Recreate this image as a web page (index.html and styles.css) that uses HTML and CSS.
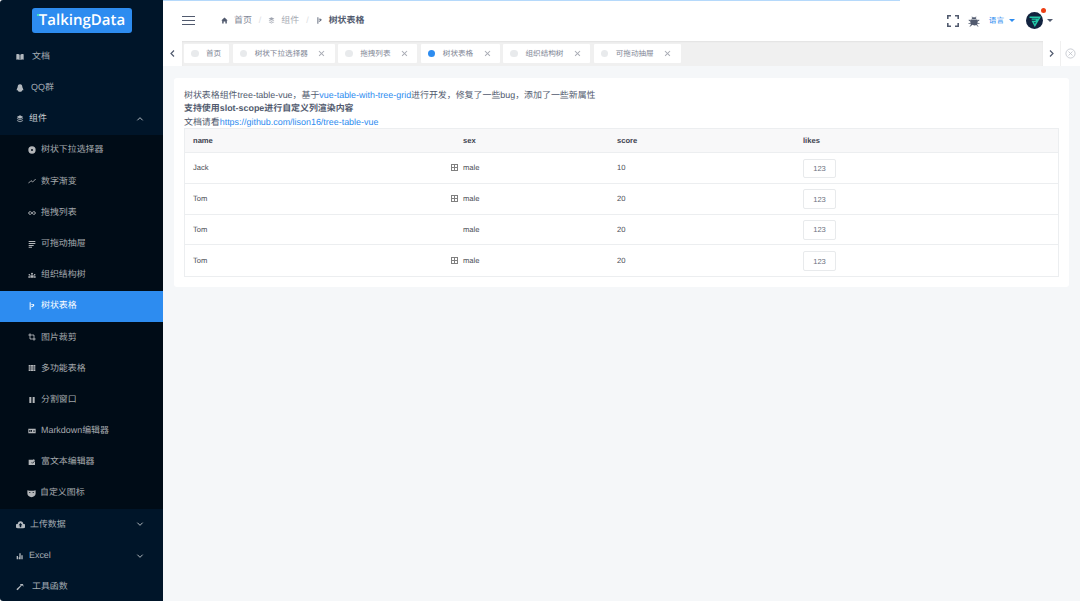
FILE: index.html
```html
<!DOCTYPE html>
<html lang="en">
  <head>
    <meta http-equiv="Content-Type" content="text/html;charset=UTF-8" />
    <title>树状表格</title>
    <link rel="stylesheet" href="styles.css">
  </head>
  <body>
    <aside class="sidebar">
      <div class="logo-wrap">
        <a class="logo"><i class="logo-dot"></i>TalkingData</a>
      </div>
      <ul class="menu">
        <li class="menu-item">
          <svg class="ico" viewBox="0 0 24 24"><path d="M1 4c4-1 8-1 10 1v16c-2-2-6-2-10-1zM23 4c-4-1-8-1-10 1v16c2-2 6-2 10-1z"/></svg>
          <span>文档</span>
        </li>
        <li class="menu-item gap-m">
          <svg class="ico" viewBox="0 0 24 24"><path d="M12 1c5 0 7 4 7 8 0 2 3 5 3 9 0 2-2 2-3 0-1 3-3 4-2 4 1 1-3 2-5 1-2 1-6 0-5-1 1 0-1-1-2-4-1 2-3 2-3 0 0-4 3-7 3-9 0-4 2-8 7-8z"/></svg>
          <span>QQ群</span>
        </li>
        <li class="menu-item gap-s is-open">
          <svg class="ico" viewBox="0 0 24 24"><path d="M12 1l10 5-10 5L2 6zM2 11l3-1 7 3.500 7-3.500 3 1-10 5zM2 17l3-1 7 3.500 7-3.500 3 1-10 5z"/></svg>
          <span>组件</span>
          <svg class="chev" viewBox="0 0 12 12"><path d="M2 8l4-4 4 4"/></svg>
        </li>
      </ul>
      <ul class="submenu">
        <li class="sub-item">
          <svg class="ico" viewBox="0 0 24 24"><path fill-rule="evenodd" d="M12 1a11 11 0 1 0 0 22 11 11 0 0 0 0-22zm0 8a3 3 0 1 1 0 6 3 3 0 0 1 0-6z"/></svg>
          <span>树状下拉选择器</span>
        </li>
        <li class="sub-item">
          <svg class="ico line" viewBox="0 0 24 24"><path d="M1 19l8-8 5 4 9-9"/></svg>
          <span>数字渐变</span>
        </li>
        <li class="sub-item">
          <svg class="ico line" viewBox="0 0 24 24"><path d="M12 12c-2-3-4-4-6-4a4 4 0 0 0 0 8c2 0 4-1 6-4 2-3 4-4 6-4a4 4 0 0 1 0 8c-2 0-4-1-6-4z"/></svg>
          <span>拖拽列表</span>
        </li>
        <li class="sub-item">
          <svg class="ico" viewBox="0 0 24 24"><path d="M2 3h20v3H2zM2 9h20v3H2zM2 15h15v3H2zM2 20h10v3H2z"/></svg>
          <span>可拖动抽屉</span>
        </li>
        <li class="sub-item">
          <svg class="ico" viewBox="0 0 24 24"><path d="M12 5a3 3 0 1 1 0 6 3 3 0 0 1 0-6zM4 9a2.500 2.500 0 1 1 0 5 2.500 2.500 0 0 1 0-5zM20 9a2.500 2.500 0 1 1 0 5 2.500 2.500 0 0 1 0-5zM1 20v-4h5v4zM7 20v-7h10v7zM18 20v-4h5v4z"/></svg>
          <span>组织结构树</span>
        </li>
        <li class="sub-item active">
          <svg class="ico" viewBox="0 0 24 24"><path d="M5 1h3v22H5zM10 6c5-1 9 0 9 3 0 4-5 6-9 7v-3c3-1 5-2 5-4 0-1-2-1-5 0z"/></svg>
          <span>树状表格</span>
        </li>
        <li class="sub-item">
          <svg class="ico line" viewBox="0 0 24 24"><path d="M6 1v17h17M1 6h17v17"/></svg>
          <span>图片裁剪</span>
        </li>
        <li class="sub-item">
          <svg class="ico" viewBox="0 0 24 24"><path d="M2 3h6v5H2zM9 3h6v5H9zM16 3h6v5h-6zM2 9.500h6v5H2zM9 9.500h6v5H9zM16 9.500h6v5h-6zM2 16h6v5H2zM9 16h6v5H9zM16 16h6v5h-6z"/></svg>
          <span>多功能表格</span>
        </li>
        <li class="sub-item">
          <svg class="ico" viewBox="0 0 24 24"><path d="M4 3h6v18H4zM14 3h6v18h-6z"/></svg>
          <span>分割窗口</span>
        </li>
        <li class="sub-item">
          <svg class="ico" viewBox="0 0 24 24"><path fill-rule="evenodd" d="M1 5h22v14H1zM4 9v6h2v-3l2 2 2-2v3h2V9h-2l-2 2-2-2zm13 0v3h-2l3 3 3-3h-2V9z"/></svg>
          <span>Markdown编辑器</span>
        </li>
        <li class="sub-item">
          <svg class="ico" viewBox="0 0 24 24"><path d="M2 5h15l-6 7v4h4l6-7v12H2zM17 3l4 4-7 7h-2v-2z"/></svg>
          <span>富文本编辑器</span>
        </li>
        <li class="sub-item gap-s">
          <svg class="ico wide" viewBox="0 0 24 24"><path fill-rule="evenodd" d="M1 3c7 2 15 2 22 0v9c0 6-5 9-11 10C6 21 1 18 1 12zm4 6c2-1 4-1 5 1-2 1-4 1-5-1zm14 0c-2-1-4-1-5 1 2 1 4 1 5-1z"/></svg>
          <span>自定义图标</span>
        </li>
      </ul>
      <ul class="menu">
        <li class="menu-item gap-s">
          <svg class="ico wide" viewBox="0 0 24 24"><path fill-rule="evenodd" d="M19 10a7 7 0 0 0-14 0 6 6 0 0 0 0 12h14a5.500 5.500 0 0 0 0-12zM12 8l5 6h-3v5h-4v-5H7z"/></svg>
          <span>上传数据</span>
          <svg class="chev" viewBox="0 0 12 12"><path d="M2 4l4 4 4-4"/></svg>
        </li>
        <li class="menu-item gap-s">
          <svg class="ico" viewBox="0 0 24 24"><path d="M2 12h4v10H2zM8 16h4v6H8zM10 4h4v18h-4zM16 10h4v12h-4z"/></svg>
          <span>Excel</span>
          <svg class="chev" viewBox="0 0 12 12"><path d="M2 4l4 4 4-4"/></svg>
        </li>
        <li class="menu-item">
          <svg class="ico" viewBox="0 0 24 24"><path d="M12 3h9l2 8-5-4L5 22l-4-3L14 7z"/></svg>
          <span>工具函数</span>
        </li>
      </ul>
    </aside>

    <div class="main">
      <div class="progress"></div>
      <header class="top-bar">
        <button class="hamburger" aria-label="Toggle"><i></i><i></i><i></i></button>
        <nav class="crumbs">
          <svg class="crumb-ico" viewBox="0 0 24 24"><path d="M12 2l11 10h-3v10h-5v-7H9v7H4V12H1z"/></svg>
          <span class="crumb">首页</span>
          <span class="sep">/</span>
          <svg class="crumb-ico faded" viewBox="0 0 24 24"><path d="M12 1l10 5-10 5L2 6zM2 11l3-1 7 3.500 7-3.500 3 1-10 5zM2 17l3-1 7 3.500 7-3.500 3 1-10 5z"/></svg>
          <span class="crumb faded">组件</span>
          <span class="sep">/</span>
          <svg class="crumb-ico" viewBox="0 0 24 24"><path d="M5 1h3v22H5zM10 6c5-1 9 0 9 3 0 4-5 6-9 7v-3c3-1 5-2 5-4 0-1-2-1-5 0z"/></svg>
          <span class="crumb current">树状表格</span>
        </nav>
        <div class="top-right">
          <svg class="fullscreen" viewBox="0 0 12 12"><path d="M0.800 4V0.800H4M8 0.800h3.200V4M11.200 8v3.200H8M4 11.200H0.800V8"/></svg>
          <svg class="bug" viewBox="0 0 24 24"><path d="M8 3l2 2c1-.5 3-.5 4 0l2-2 1 1-2 2c1 .5 2 2 2 2H7s1-1.500 2-2L7 4zM6 9h12c1 0 1 1 1 2l3-2 1 1.500-4 3v2l4 1V18l-4-1c0 1 0 2-1 2.500l3 3-1 1-3.500-3.500c-1 .5-2 1-3 1-1.500 0-3-.5-4.500-1.500L4 23.500l-1-1 3-3c-1-.5-1-1.500-1-2.500l-4 1v-1.500l4-1v-2l-4-3L2 9l3 2c0-1 0-2 1-2z"/></svg>
          <span class="lang">语言</span>
          <i class="caret blue"></i>
          <span class="avatar">
            <svg viewBox="0 0 24 24"><path class="av-green" d="M5 7.500h14.500L12.500 19l-3-5.500h4.500l1.500-3.500H8"/></svg>
            <i class="badge"></i>
          </span>
          <i class="caret"></i>
        </div>
      </header>

      <div class="tag-bar">
        <button class="tag-nav">
          <svg viewBox="0 0 12 12"><path d="M8 2L4 6l4 4"/></svg>
        </button>
        <div class="tags">
          <span class="tag"><i class="dot"></i>首页</span>
          <span class="tag closable"><i class="dot"></i>树状下拉选择器<b class="x"></b></span>
          <span class="tag closable"><i class="dot"></i>拖拽列表<b class="x"></b></span>
          <span class="tag closable"><i class="dot on"></i>树状表格<b class="x"></b></span>
          <span class="tag closable"><i class="dot"></i>组织结构树<b class="x"></b></span>
          <span class="tag closable"><i class="dot"></i>可拖动抽屉<b class="x"></b></span>
        </div>
        <button class="tag-nav">
          <svg viewBox="0 0 12 12"><path d="M4 2l4 4-4 4"/></svg>
        </button>
        <button class="tag-close">
          <svg viewBox="0 0 12 12"><circle cx="6" cy="6" r="5"/><path d="M3.800 3.800l4.400 4.400M8.200 3.800l-4.400 4.400"/></svg>
        </button>
      </div>

      <main class="content">
        <section class="card">
          <p>树状表格组件tree-table-vue，基于<a>vue-table-with-tree-grid</a>进行开发，修复了一些bug，添加了一些新属性</p>
          <p><strong>支持使用slot-scope进行自定义列渲染内容</strong></p>
          <p>文档请看<a>https://github.com/lison16/tree-table-vue</a></p>

          <div class="table">
            <div class="row head">
              <span>name</span>
              <span class="sex-cell">sex</span>
              <span>score</span>
              <span>likes</span>
            </div>
            <div class="row">
              <span>Jack</span>
              <span class="sex-cell"><i class="expand"></i>male</span>
              <span>10</span>
              <span><button class="btn">123</button></span>
            </div>
            <div class="row">
              <span>Tom</span>
              <span class="sex-cell"><i class="expand"></i>male</span>
              <span>20</span>
              <span><button class="btn">123</button></span>
            </div>
            <div class="row">
              <span>Tom</span>
              <span class="sex-cell">male</span>
              <span>20</span>
              <span><button class="btn">123</button></span>
            </div>
            <div class="row">
              <span>Tom</span>
              <span class="sex-cell"><i class="expand"></i>male</span>
              <span>20</span>
              <span><button class="btn">123</button></span>
            </div>
          </div>
        </section>
      </main>
    </div>
  </body>
</html>
```

FILE: styles.css
```css
* {
  margin: 0;
  padding: 0;
  box-sizing: border-box;
}

html,
body {
  height: 100%;
  overflow: hidden;
}

body {
  display: flex;
  font-family: "Liberation Sans", "Noto Sans CJK SC", sans-serif;
  font-size: 8.93px;
  line-height: 13.5px;
  color: #515a6e;
  background: #fff;
  text-rendering: geometricPrecision;
}

ul {
  list-style: none;
}

button {
  border: none;
  background: none;
  font-family: inherit;
}

/* Sidebar */
.sidebar {
  width: 163px;
  flex-shrink: 0;
  background: #001529;
  border-radius: 3px 0 0 3px;
  overflow: hidden;
  color: rgba(255, 255, 255, 0.65);
}

.logo-wrap {
  height: 41px;
  padding: 8px 0 0 32px;
}

.logo {
  position: relative;
  display: block;
  width: 100px;
  height: 25px;
  background: #2d8cf0;
  border-radius: 3px;
  color: #fff;
  font-family: "Open Sans", sans-serif;
  font-size: 15px;
  font-weight: 600;
  line-height: 25px;
  text-align: center;
}

.logo-dot {
  position: absolute;
  top: 6px;
  left: 5px;
  width: 2px;
  height: 2px;
  background: #3fe0c0;
}

.menu-item,
.sub-item {
  display: flex;
  align-items: center;
  height: 31.2px;
}

.menu-item {
  padding-left: 16px;
}

.sub-item {
  padding-left: 28px;
}

.submenu {
  background: #000c17;
}

.sub-item.active {
  background: #2d8cf0;
  color: #fff;
}

.ico {
  width: 8px;
  height: 8px;
  margin-right: 8px;
  fill: rgba(255, 255, 255, 0.7);
  flex-shrink: 0;
}

.sub-item .ico {
  margin-right: 5px;
}

.sub-item.active .ico {
  fill: #fff;
}

.ico.line {
  fill: none;
  stroke: rgba(255, 255, 255, 0.7);
  stroke-width: 2.6;
}

.ico.wide {
  width: 9px;
  height: 9px;
}

.menu-item.gap-m .ico {
  margin-right: 7px;
}

.menu-item.gap-s .ico {
  margin-right: 5px;
}

.sub-item.gap-s {
  padding-left: 27px;
}

.sub-item.gap-s .ico {
  margin-right: 4px;
}

.is-open {
  color: rgba(255, 255, 255, 0.8);
}

.chev {
  width: 8px;
  height: 8px;
  margin-left: auto;
  margin-right: 19px;
  fill: none;
  stroke: rgba(255, 255, 255, 0.75);
  stroke-width: 1.4;
}

/* Main column */
.main {
  position: relative;
  flex: 1;
  min-width: 0;
  display: flex;
  flex-direction: column;
  background: #f5f7f9;
}

.progress {
  position: absolute;
  top: 0;
  left: 0;
  width: 737px;
  height: 1px;
  background: #b5d9fb;
}

/* Header */
.top-bar {
  display: flex;
  align-items: center;
  height: 41px;
  padding: 0 27px 0 19px;
  background: #fff;
  flex-shrink: 0;
}

.hamburger {
  display: flex;
  flex-direction: column;
  justify-content: space-between;
  width: 13px;
  height: 10px;
  margin-right: 26px;
}

.hamburger i {
  display: block;
  height: 1.400px;
  background: #515a6e;
}

.crumbs {
  display: flex;
  align-items: center;
}

.crumb-ico {
  width: 7px;
  height: 7px;
  margin-right: 6px;
  fill: #515a6e;
}

.crumb-ico.faded {
  fill: #a0a5b0;
}

.crumb {
  color: #808695;
}

.crumb.faded {
  color: #a8abb4;
}

.crumb.current {
  color: #515a6e;
  font-weight: 700;
}

.sep {
  margin: 0 7px;
  color: #dcdee2;
}

.top-right {
  display: flex;
  align-items: center;
  margin-left: auto;
}

.fullscreen {
  width: 12px;
  height: 12px;
  margin-right: 9px;
  fill: none;
  stroke: #515a6e;
  stroke-width: 1.600;
}

.bug {
  width: 12px;
  height: 12px;
  margin-right: 9px;
  fill: #515a6e;
}

.lang {
  color: #2d8cf0;
  font-size: 7.6px;
  margin-right: 5px;
}

.caret {
  display: block;
  width: 0;
  height: 0;
  border: 3px solid transparent;
  border-top: 3.500px solid #515a6e;
  border-bottom: none;
}

.caret.blue {
  border-top-color: #2d8cf0;
  margin-right: 11px;
}

.avatar {
  position: relative;
  display: block;
  width: 17px;
  height: 17px;
  margin-right: 4px;
  border-radius: 50%;
  background: #12233f;
}

.avatar svg {
  display: block;
  width: 17px;
  height: 17px;
}

.av-green {
  fill: none;
  stroke: #22c9a8;
  stroke-width: 2;
}

.badge {
  position: absolute;
  top: -4px;
  right: -3px;
  width: 5px;
  height: 5px;
  border-radius: 50%;
  background: #ed3f14;
}

/* Tags */
.tag-bar {
  display: flex;
  height: 25px;
  background: #fff;
  flex-shrink: 0;
}

.tag-nav {
  display: flex;
  align-items: center;
  justify-content: center;
  width: 19px;
  flex-shrink: 0;
}

.tag-nav svg {
  width: 9px;
  height: 9px;
  fill: none;
  stroke: #515a6e;
  stroke-width: 1.600;
}

.tag-bar .tag-nav:nth-of-type(2) {
  width: 17px;
}

.tag-close {
  display: flex;
  align-items: center;
  justify-content: center;
  width: 20px;
  border-left: 1px solid #f0f0f0;
}

.tag-close svg {
  width: 11px;
  height: 11px;
  fill: none;
  stroke: #b8bcc4;
  stroke-width: 0.800;
}

.tags {
  flex: 1;
  display: flex;
  align-items: center;
  gap: 3.500px;
  min-width: 0;
  padding-left: 2px;
  background: #f0f0f0;
  box-shadow: inset 0 1px 2px rgba(0, 0, 0, 0.06);
  color: #808695;
  font-size: 7.600px;
}

.tag {
  display: flex;
  align-items: center;
  height: 19px;
  padding: 0 8px 0 7px;
  background: #fff;
  border-radius: 1px;
}

.tag.closable {
  padding-right: 9.800px;
}

.dot {
  width: 7.500px;
  height: 7.500px;
  margin-right: 7.500px;
  border-radius: 50%;
  background: #e8eaec;
}

.dot.on {
  background: #2d8cf0;
}

.x {
  position: relative;
  width: 6px;
  height: 6px;
  margin-left: 11px;
}

.x::before,
.x::after {
  content: "";
  position: absolute;
  top: 2.500px;
  left: -0.500px;
  width: 7px;
  height: 0.800px;
  background: #a8abb4;
  transform: rotate(45deg);
}

.x::after {
  transform: rotate(-45deg);
}

/* Content */
.content {
  flex: 1;
  padding: 12px 11px;
}

.card {
  padding: 10.500px 10px 10px;
  background: #fff;
  border-radius: 3px;
}

.card a {
  color: #2d8cf0;
}

.table {
  margin-top: -1px;
  border: 1px solid #eceef0;
  color: #4a4d55;
  font-size: 7.600px;
  line-height: 12px;
}

.row {
  display: grid;
  grid-template-columns: 270px 154px 186px 1fr;
  align-items: center;
  height: 30.750px;
  padding: 1px 0 0 8px;
  border-bottom: 1px solid #eceef0;
}

.row:last-child {
  border-bottom: none;
}

.row.head {
  height: 24px;
  background: #f8f8f9;
  color: #3f4450;
  font-weight: 700;
}

.sex-cell {
  position: relative;
}

.expand {
  position: absolute;
  top: 2px;
  left: -12px;
  width: 7px;
  height: 7px;
  border: 1px solid #808080;
  background:
    linear-gradient(#808080, #808080) center / 100% 1px no-repeat,
    linear-gradient(#808080, #808080) center / 1px 100% no-repeat;
}

.btn {
  display: block;
  width: 33px;
  height: 19.500px;
  border: 1px solid #e8eaec;
  border-radius: 2px;
  color: #6b7180;
  font-size: 7.600px;
  background: #fff;
}
```
